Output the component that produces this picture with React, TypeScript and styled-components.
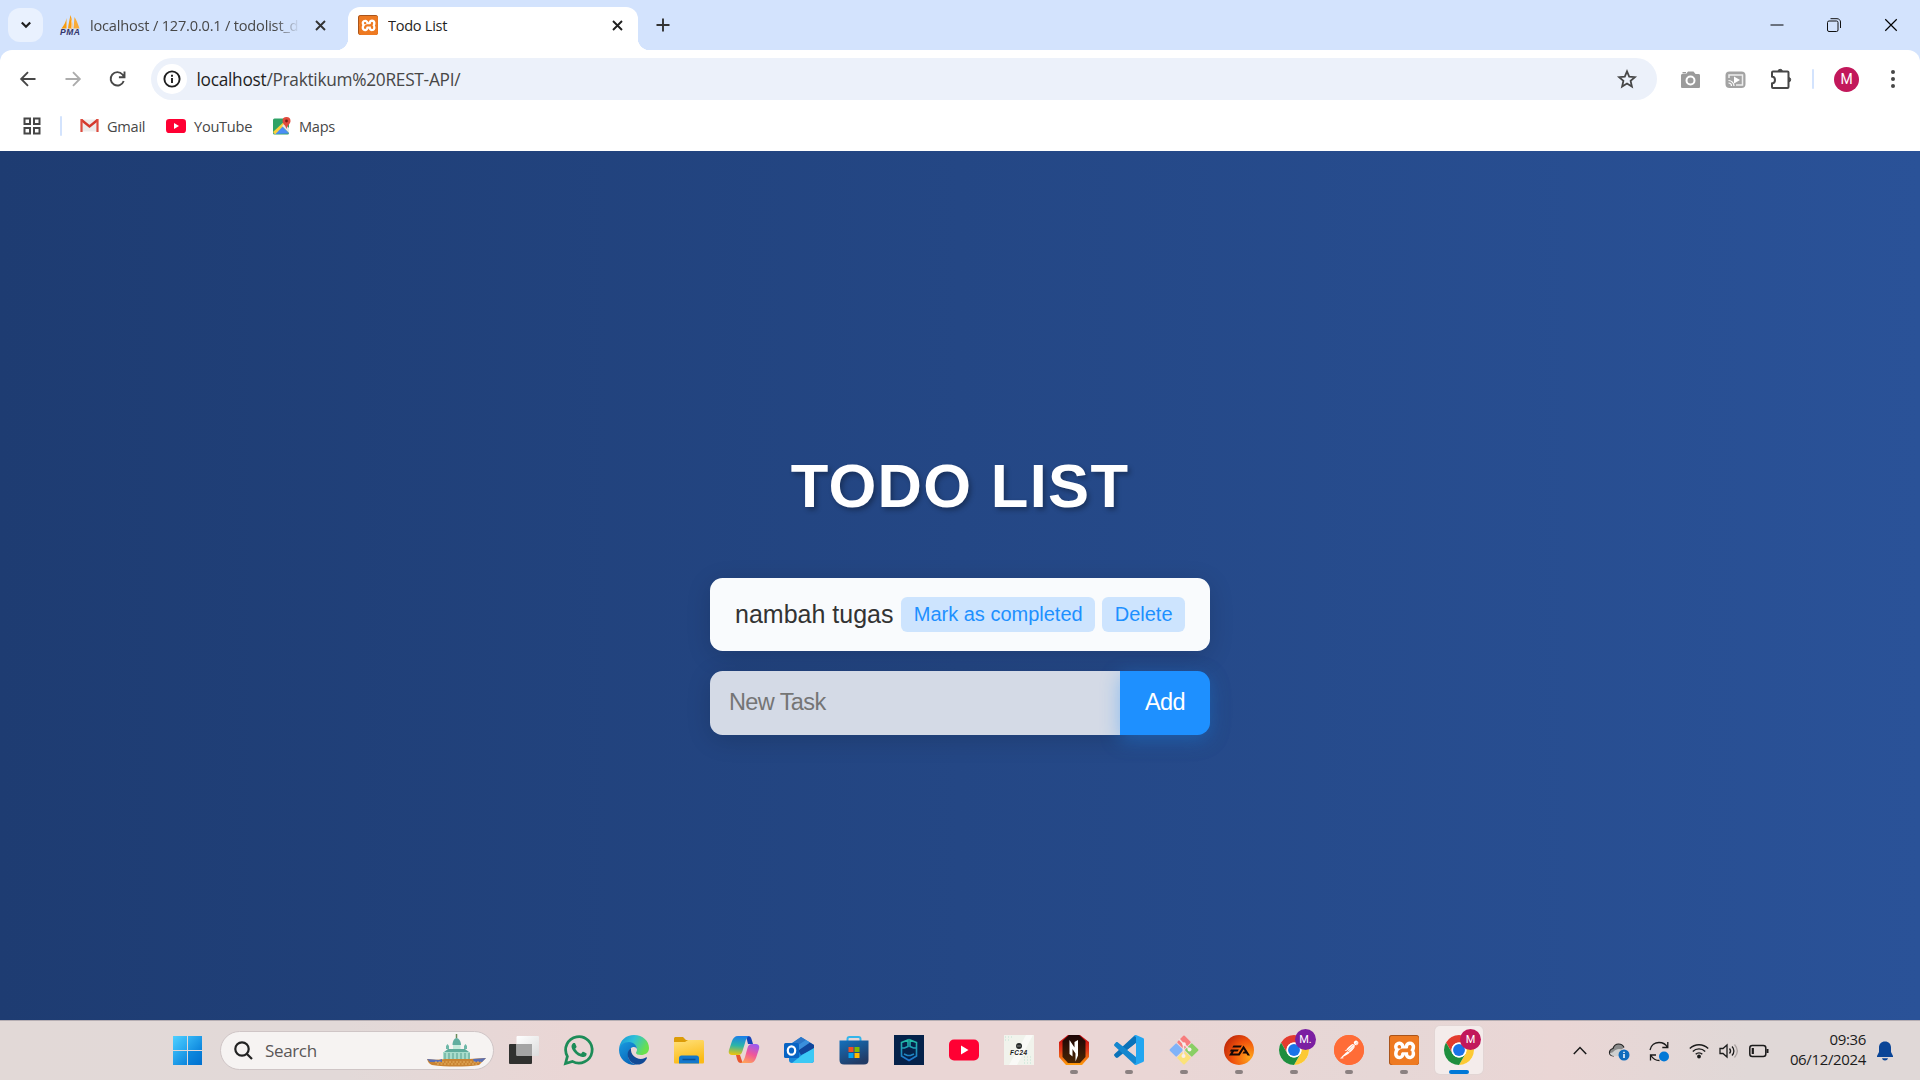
import React from "react";
import styled, { createGlobalStyle } from "styled-components";
import { SiXampp, SiPostman, SiEa } from "react-icons/si";

const UI = `"Open Sans", "Noto Sans", sans-serif`;
const ARIAL = `"Liberation Sans", Arial, sans-serif`;

const Global = createGlobalStyle`
  *, *::before, *::after { box-sizing: border-box; }
  html, body { margin: 0; padding: 0; overflow: hidden; }
  body { font-family: ${UI}; }
  button, input { font: inherit; letter-spacing: inherit; border: 0; margin: 0; padding: 0; background: none; }
  svg { display: block; flex: none; overflow: visible; }
`;

const Screen = styled.div`
  width: 1920px; height: 1080px; display: flex; flex-direction: column; overflow: hidden;
`;

/* ---------- browser chrome ---------- */
const TabStrip = styled.header`
  height: 50px; flex: none; background: #d3e3fd; display: flex; padding: 0 15px 0 8px;
`;
const TabSearch = styled.button`
  width: 35px; height: 34px; margin-top: 8px; border-radius: 12px; background: #e9f1fe;
  display: grid; place-items: center;
`;
const Tab = styled.div<{ $active?: boolean }>`
  position: relative; display: flex; align-items: center;
  width: ${(p) => (p.$active ? 290 : 288)}px;
  margin-left: ${(p) => (p.$active ? 0 : 17)}px;
  height: ${(p) => (p.$active ? 43 : 50)}px;
  margin-top: ${(p) => (p.$active ? 7 : 0)}px;
  padding: ${(p) => (p.$active ? "0 15px 7px 10px" : "0 22px 0 0")};
  border-radius: 12px 12px 0 0;
  background: ${(p) => (p.$active ? "#fff" : "transparent")};
  ${(p) =>
    p.$active &&
    `&::before, &::after { content: ""; position: absolute; bottom: 0; width: 12px; height: 12px; }
     &::before { left: -12px; background: radial-gradient(circle at 0 0, transparent 12px, #fff 12.5px); }
     &::after { right: -12px; background: radial-gradient(circle at 100% 0, transparent 12px, #fff 12.5px); }`}
`;
const TabTitle = styled.span<{ $fade?: boolean }>`
  flex: 1; margin-left: ${(p) => (p.$fade ? 9 : 10)}px; overflow: hidden; white-space: nowrap; font-size: 14.6px; line-height: 20px;
  letter-spacing: ${(p) => (p.$fade ? "-0.2px" : "-0.3px")};
  color: ${(p) => (p.$fade ? "#474747" : "#1f1f1f")};
  ${(p) => p.$fade && "margin-right: 15px; mask-image: linear-gradient(90deg, #000 88%, transparent);"}
`;
const NewTab = styled.button`margin: 17px 0 0 17px; width: 16px; height: 16px;`;
const WindowControls = styled.div`
  margin-left: auto; display: flex; align-items: center; gap: 43px; height: 49px; padding-right: 7px;
`;
const ToolbarWrap = styled.div`background: #d3e3fd; flex: none;`;
const Toolbar = styled.div`
  height: 55px; background: #fff; border-radius: 12px 12px 0 0; display: flex; align-items: center;
  padding: 3px 18px 0 18px;
`;
const NavButtons = styled.div`display: flex; gap: 24.5px; width: 132.5px; flex: none;`;
const Omnibox = styled.div`
  width: 1506.5px; flex: none; height: 42px; border-radius: 21px; background: #ecf1fa; display: flex; align-items: center;
  padding: 0 20px 0 6px;
`;
const InfoDisc = styled.span`
  width: 30px; height: 30px; border-radius: 50%; background: #fff; display: grid; place-items: center;
`;
const Url = styled.span`
  flex: 1; margin: 1px 0 0 10px; font-size: 17.3px; letter-spacing: -0.28px; line-height: 24px; color: #474747;
  b { font-weight: 400; color: #1f1f1f; }
`;
const Extensions = styled.div`display: flex; align-items: center; gap: 24px; margin-left: 23px;`;
const Rule = styled.i<{ $gap: number }>`
  width: 2px; height: 20px; background: #d3e3fd; border-radius: 1px; margin-left: ${(p) => p.$gap}px; flex: none;
`;
const Avatar = styled.span`
  width: 25px; height: 25px; border-radius: 50%; background: #c2185b; color: #fff; font: 14px/25px Roboto, sans-serif;
  text-align: center; margin: 0 auto 0 20px; flex: none;
`;
const Bookmarks = styled.nav`
  height: 46px; flex: none; background: #fff; display: flex; align-items: center; padding: 0 0 5px 23px;
`;
const Bookmark = styled.a<{ $w: number; $ml?: number }>`
  display: flex; align-items: center; gap: 8px; width: ${(p) => p.$w}px; margin-left: ${(p) => p.$ml ?? 0}px;
  font-size: 14.6px; letter-spacing: -0.27px; line-height: 20px; color: #474747; white-space: nowrap;
`;

/* ---------- page ---------- */
const Page = styled.main`
  height: 869px; flex: none; background: linear-gradient(90deg, #1e3c72, #2a5298);
  display: flex; flex-direction: column; align-items: center; font-family: ${ARIAL};
`;
const Title = styled.h1`
  margin: 300px 0 0; font-size: 61.5px; line-height: 69px; letter-spacing: 1.3px; font-weight: 700; color: #fff;
  text-shadow: 2.5px 2.5px 5px rgba(0, 0, 0, 0.3);
`;
const Task = styled.section`
  margin-top: 58px; width: 500px; height: 73px; border-radius: 12.5px; background: #f9fbfd;
  display: flex; align-items: center; padding: 0 25px; color: #333; font-size: 25px;
  box-shadow: 0 5px 25px rgba(0, 0, 0, 0.15);
`;
const TaskName = styled.span`flex: 1; white-space: nowrap;`;
const Action = styled.button`
  height: 35px; padding: 0 12.5px; margin-left: 7px; border-radius: 6.25px; background: #cde4fe; color: #1e90ff;
  font-size: 20px; line-height: 35px; white-space: nowrap;
`;
const Form = styled.form`
  margin-top: 20px; width: 500px; height: 64px; display: flex; border-radius: 12.5px;
  box-shadow: 0 5px 25px rgba(0, 0, 0, 0.15); font-size: 23.5px; letter-spacing: -0.6px;
`;
const Field = styled.input`
  width: 410px; padding: 0 19px 1px; background: #d4dae6; border-radius: 12.5px 0 0 12.5px; outline: 0; color: #333;
  &::placeholder { color: #757575; opacity: 1; }
`;
const Add = styled.button`
  width: 90px; padding-bottom: 1px; background: #1e90ff; color: #fff; border-radius: 0 12.5px 12.5px 0;
  box-shadow: 0 5px 19px rgba(30, 144, 255, 0.4);
`;

/* ---------- taskbar ---------- */
const Taskbar = styled.footer`
  height: 60px; flex: none; border-top: 1px solid #b5aeb3; display: flex; align-items: flex-start;
  padding: 0 27px 0 173px;
  background: linear-gradient(90deg, #e2d9d7 0, #e2d9d8 18%, #ead6d5 30%, #ead6d5 60%, #e6d7d6 72%, #ead6d5 81%, #e0d8d7 91%, #e0d8d7 100%);
`;
const Start = styled.div`
  width: 29px; height: 29px; margin-top: 15px; display: grid; grid-template-columns: 14px 14px; gap: 1px;
  i { background: linear-gradient(135deg, #35b6f5, #0b84dc); height: 14px; }
  i:first-child { background: linear-gradient(135deg, #4fd0ff, #22a3ee); }
  i:last-child { background: linear-gradient(135deg, #0e8ce0, #0070cf); }
`;
const Search = styled.div`
  width: 274px; height: 39px; margin: 10px 6px 0 18px; border: 1px solid #cfc5c6; border-radius: 20px; background: #f6f3f2;
  display: flex; align-items: center; padding: 0 7px 0 13px; color: #5a5757; font-size: 17px; letter-spacing: -0.35px;
  span { flex: 1; margin-left: 12px; }
`;
const AppTile = styled.div<{ $active?: boolean; $running?: boolean }>`
  position: relative; width: 48px; height: 48px; margin: 5px 7px 0 0; flex: none; display: grid; place-items: center;
  border-radius: 5px;
  background: ${(p) => (p.$active ? "#f4eceb" : "transparent")};
  box-shadow: ${(p) => (p.$active ? "0 0 0 1px #e2d5d4" : "none")};
  &::after {
    content: ""; position: absolute; bottom: 0; border-radius: 2px; height: 4px;
    width: ${(p) => (p.$active ? 20 : 8)}px; left: ${(p) => (p.$active ? 14 : 20)}px;
    background: ${(p) => (p.$active ? "#0078d7" : p.$running ? "#8b8181" : "transparent")};
  }
`;
const Badge = styled.b<{ $c: string }>`
  position: absolute; right: 2px; top: 3px; width: 21px; height: 21px; border-radius: 50%; background: ${(p) => p.$c};
  color: #fff; font: 11px/21px Roboto, sans-serif; text-align: center;
`;
const Logo = styled.span<{ $s: number; $bg: string; $r: string; $pad?: number; $fg: string; $edge?: string }>`
  width: ${(p) => p.$s}px; height: ${(p) => p.$s}px; flex: none; display: grid; place-items: center;
  background: ${(p) => p.$bg}; border-radius: ${(p) => p.$r}; color: ${(p) => p.$fg};
  box-shadow: ${(p) => (p.$edge ? `inset 0 0 0 1px ${p.$edge}` : "none")};
`;
const Tray = styled.div`margin-left: auto; height: 60px; display: flex; align-items: center;`;
const TrayIcon = styled.span<{ $r: number }>`margin-right: ${(p) => p.$r}px;`;
const Clock = styled.div`
  text-align: right; font-size: 15px; line-height: 20px; letter-spacing: -0.35px; color: #1b1b1b; width: 80px;
  margin-right: 11px; padding-bottom: 4px; white-space: nowrap;
`;

type SP = React.SVGProps<SVGSVGElement> & { s?: number };
const Svg = ({ s = 30, viewBox = "0 0 30 30", ...r }: SP) => (
  <svg width={s} height={s} viewBox={viewBox} fill="none" {...r} />
);

const Cross = ({ s = 11, w = 1.9, c = "#1f1f1f" }) => (
  <Svg s={s} viewBox="0 0 11 11" stroke={c} strokeWidth={w}><path d="M1 1l9 9M10 1l-9 9" /></Svg>
);

const Pma = () => (
  <Svg s={21} viewBox="0 0 21 21">
    <path d="M6.500 3C6 7 4 10 1.500 13.500h5zM10.500 0C9.500 5 8.500 9 8 13.500h4c.5-5 0-9-1.500-13.500z" fill="#f89c0e" />
    <path d="M14.500 2c-.5 4-.5 8-1 11.500h6C18 9 16.500 5 14.500 2z" fill="#f9ab38" />
    <path d="M10.500 3c1 4 1 7 .5 10.500h1.500c.5-4 0-7-2-10.500z" fill="#fbd09a" />
    <text x="0" y="20" fontFamily="Liberation Sans, sans-serif" fontWeight="700" fontStyle="italic" fontSize="8.500" textLength="20" fill="#34356b">PMA</text>
  </Svg>
);

const Xampp = ({ s = 30 }) => (
  <Logo $s={s} $bg="radial-gradient(#fff 0 60%, #ee7a22 61%)" $r="3px" $fg="#ee7a22" $edge="#a9541b"><SiXampp size={s - 1} /></Logo>
);

const YouTube = ({ s = 30 }) => (
  <Svg s={s}><rect y="4.500" width="30" height="21" rx="5" fill="#ff0033" /><path d="M12 10.500v9l7.500-4.500z" fill="#fff" /></Svg>
);

const Chrome = () => (
  <Svg viewBox="0 0 48 48">
    <circle cx="24" cy="24" r="24" fill="#fff" />
    <path d="M24 12h20.780A24 24 0 0 0 3.220 12l10.390 18A12 12 0 0 1 24 12z" fill="#e33b2e" />
    <path d="M34.390 30L24 48a24 24 0 0 0 20.780-36H24a12 12 0 0 1 10.390 18z" fill="#fcc934" />
    <path d="M13.610 30L3.220 12A24 24 0 0 0 24 48l10.390-18a12 12 0 0 1-20.780 0z" fill="#1e8e3e" />
    <circle cx="24" cy="24" r="12" fill="#fff" /><circle cx="24" cy="24" r="9.500" fill="#1a73e8" />
  </Svg>
);

const Cathedral = () => (
  <svg width="59" height="33" viewBox="0 0 59 33">
    <path d="M0 25c6 1 12 1 18 0h24l17-1-7 7c-14 2-32 2-47 0-3-1-4-3-5-6z" fill="#c98332" />
    <path d="M0 25l12 1 3-1v3H3zM46 25l13-1-4 4h-8z" fill="#5a6fb4" />
    <path d="M8 28h46M10 30h40" stroke="#e8b565" strokeWidth="1" strokeDasharray="2 1.500" />
    <path d="M16 25v-7h27v7z" fill="#a8dccb" />
    <path d="M18 25v-6M22 25v-6M26 25v-6M30 25v-6M34 25v-6M38 25v-6M42 25v-6" stroke="#559f90" />
    <path d="M17 18l4-3h17l4 3z" fill="#5eab9b" />
    <path d="M26 15v-4h7.500v4z" fill="#c6ebdc" />
    <path d="M25.500 11c0-4 2-7 4-7s4.500 3 4.500 7z" fill="#5fae9f" />
    <path d="M29.500 0v4" stroke="#6a8a5a" strokeWidth="1.500" />
    <path d="M19 15v-3l1.500-2 1.500 2v3zM37 15v-3l1.500-2 1.500 2v3z" fill="#6fb8a8" />
  </svg>
);

const TaskView = () => (
  <Svg>
    <defs><linearGradient id="tvw" x1="0" y1="0" x2="1" y2="1"><stop stopColor="#fff" /><stop offset="1" stopColor="#dcdcdc" /></linearGradient></defs>
    <rect y="9" width="23" height="20" rx="1" fill="#30312f" />
    <rect x="7.500" y="1" width="22.500" height="20" rx="1" fill="url(#tvw)" />
    <path d="M7.500 9H23v12H8.500a1 1 0 0 1-1-1z" fill="#a4a4a4" />
  </Svg>
);

const WhatsApp = () => (
  <Svg viewBox="0 0 24 24">
    <path fill="#1d8c58" d="M17.472 14.382c-.297-.149-1.758-.867-2.030-.967-.273-.099-.471-.148-.670.150-.197.297-.767.966-.940 1.164-.173.199-.347.223-.644.075-.297-.150-1.255-.463-2.390-1.475-.883-.788-1.480-1.761-1.653-2.059-.173-.297-.018-.458.130-.606.134-.133.298-.347.446-.520.149-.174.198-.298.298-.497.099-.198.050-.371-.025-.520-.075-.149-.669-1.612-.916-2.207-.242-.579-.487-.500-.669-.510-.173-.008-.371-.010-.570-.010-.198 0-.520.074-.792.372-.272.297-1.040 1.016-1.040 2.479 0 1.462 1.065 2.875 1.213 3.074.149.198 2.096 3.200 5.077 4.487.709.306 1.262.489 1.694.625.712.227 1.360.195 1.871.118.571-.085 1.758-.719 2.006-1.413.248-.694.248-1.289.173-1.413-.074-.124-.272-.198-.570-.347" />
    <path d="M1.200 22.800l1.500-5.700a10.600 10.600 0 1 1 4 4z" stroke="#1d8c58" strokeWidth="2.200" />
  </Svg>
);

const Edge = () => (
  <Svg>
    <defs>
      <linearGradient id="e1" x1="0" y1="0" x2="1" y2=".4"><stop stopColor="#1591d8" /><stop offset=".5" stopColor="#2fc0d8" /><stop offset="1" stopColor="#69e04c" /></linearGradient>
      <linearGradient id="e2" x1="0" y1="0" x2=".6" y2="1"><stop stopColor="#1a9be0" /><stop offset="1" stopColor="#0765b8" /></linearGradient>
    </defs>
    <path d="M0 14C1 5 7 0 15 0c9 0 15 6 15 13 0 5-4 7-8 7-3 0-5-1-5-2s1-1 1-4c0-3-4-6-8-6C5 8 1 11 0 14z" fill="url(#e1)" />
    <path d="M0 15c0-5 5-8 10-8 5 0 8 4 8 7-1-2-3-2-4-2-3 1-5 4-5 8 0 5 4 9 9 10C8 31 0 24 0 15z" fill="url(#e2)" />
    <path d="M12 13c-3 2-4 5-3 9 2 6 8 9 13 7 3-1 5-4 6-6 0-1-1-1-2 0-7 3-15-2-14-10z" fill="#114a96" />
  </Svg>
);

const Folder = () => (
  <Svg>
    <defs><linearGradient id="fo" x1="0" y1="0" x2=".3" y2="1"><stop stopColor="#ffe07a" /><stop offset="1" stopColor="#fbbb16" /></linearGradient></defs>
    <path d="M0 4c0-1.500.5-2 2-2h7l3 3h17v5H0z" fill="#dc9c08" />
    <path d="M0 7h11l3-2h14c1.500 0 2 .5 2 2v20c0 1-.5 1.500-1.500 1.500h-27C.5 28.500 0 28 0 27z" fill="url(#fo)" />
    <path d="M5 28.500V23c0-1.500 1-2.500 2.500-2.500h15c1.500 0 2.500 1 2.500 2.500v5.500z" fill="#1478cc" /><path d="M8.500 24.500h13" stroke="#0a4f94" strokeWidth="1.500" />
  </Svg>
);

const Copilot = () => (
  <Svg>
    <defs>
      <linearGradient id="c1" x1=".4" y1="0" x2=".3" y2="1"><stop stopColor="#1b7fe8" /><stop offset=".5" stopColor="#2cb5a8" /><stop offset="1" stopColor="#f0c50a" /></linearGradient>
      <linearGradient id="c2" x1=".7" y1="0" x2=".3" y2="1"><stop stopColor="#9b5af0" /><stop offset=".5" stopColor="#f0569a" /><stop offset="1" stopColor="#ffa05a" /></linearGradient>
    </defs>
    <path d="M17 1h2c2 0 3 1 3.500 3l1.500 5h-5z" fill="#1343b8" />
    <path d="M9 1h11c-2 1-3 3-4 7l-2.500 8c-1 3-2 4-4.500 4H4c-3 0-5-1-4-5L3 6c1-3 3-5 6-5z" fill="url(#c1)" />
    <path d="M7 20h4l2 6c1 2 1 2 2 2h-3c-2 0-3-1-4-4z" fill="#e8562e" />
    <path d="M21 28H12c2-1 3-3 4-6l2.500-9c1-3 2-4 4.500-4h3c3 0 5 1 4 5l-3 9c-1 3-3 5-6 5z" fill="url(#c2)" />
  </Svg>
);

const Outlook = () => (
  <Svg>
    <path d="M5 10L17 2l13 8v15c0 2-1 3-3 3H8c-2 0-3-1-3-3z" fill="#1686d9" />
    <path d="M7 9l10-7 5 3-11 8z" fill="#2d76c8" /><path d="M30 10v4L17 20l-3-5 11-8z" fill="#10459a" />
    <path d="M22 5l4 2.500L15 15l-4-3z" fill="#3b8fdc" />
    <path d="M30 13v12c0 2-1 3-3 3H8l10-8z" fill="#3cc9f5" />
    <rect y="8" width="15" height="15" rx="1.500" fill="#0864c4" /><ellipse cx="7.500" cy="15.500" rx="3.700" ry="4.200" stroke="#fff" strokeWidth="2.200" />
  </Svg>
);

const Store = () => (
  <Svg>
    <defs><linearGradient id="st" x1="0" y1="0" x2=".5" y2="1"><stop stopColor="#1471bd" /><stop offset="1" stopColor="#213b66" /></linearGradient></defs>
    <path d="M8.500 6V4c0-1.500.5-2 2-2h9c1.500 0 2 .5 2 2v2" stroke="#35b5ea" strokeWidth="2" />
    <path d="M.5 5.500h29V25c0 3-1.500 4.500-4.500 4.500H5C2 29.500.5 28 .5 25z" fill="url(#st)" />
    <path d="M9.500 12h5v5h-5z" fill="#f25022" /><path d="M15.500 12h5v5h-5z" fill="#7fba00" /><path d="M9.500 18h5v5h-5z" fill="#00a4ef" /><path d="M15.500 18h5v5h-5z" fill="#ffb900" />
  </Svg>
);

const GameApp = () => (
  <Svg>
    <defs><linearGradient id="pg" gradientUnits="userSpaceOnUse" x1="0" y1="4" x2="0" y2="26"><stop stopColor="#22c3a4" /><stop offset="1" stopColor="#1e6fd0" /></linearGradient></defs>
    <path d="M0 0h30v30H0z" fill="#05224a" />
    <g stroke="url(#pg)" strokeWidth="1.600"><path d="M7.500 14V7.500L14 5v6.500L10.500 13H7.500v8l7.500 4.500 7.500-4.500V7.500L16 5v6.500l3.500 1.500h3" /><path d="M10 19l3.500 1.500h3L20 19" /></g>
  </Svg>
);

const Fc24 = () => (
  <Svg>
    <path d="M0 0h30v30H0z" fill="#f1f3ec" /><path d="M22 0L5 30h8L29 0z" fill="#fafaf7" />
    <path d="M1 2h9M1 5h6M20 22h9M20 25h9M20 28h9" stroke="#bfe3d3" strokeDasharray="1 2" />
    <circle cx="15" cy="11" r="3" fill="#252a28" /><path d="M13 11h4" stroke="#888" />
    <text x="6" y="19.500" fontFamily="Liberation Sans, sans-serif" fontWeight="700" fontStyle="italic" fontSize="6.500" textLength="17" fill="#1c201e">FC24</text>
  </Svg>
);

const Nitro = () => (
  <Svg>
    <defs><linearGradient id="ni" x1="0" y1="0" x2="0" y2="1"><stop stopColor="#c4060f" /><stop offset=".5" stopColor="#e0381a" /><stop offset="1" stopColor="#ff9c0a" /></linearGradient>
      <linearGradient id="ni2" x1="0" y1="0" x2="0" y2="1"><stop stopColor="#1c0505" /><stop offset="1" stopColor="#4a2505" /></linearGradient></defs>
    <path d="M9 0h12l9 7v15l-7 8H7l-7-8V7z" fill="url(#ni)" /><path d="M10 0h10l6.500 6v16L21 28H9l-5.500-6V6z" fill="url(#ni2)" />
    <path d="M10.500 5l5 7.500V7l3.500-2v15.500l-2.500 6v-8l-3-4.500v7.500L10.500 19z" fill="#fff" />
  </Svg>
);

const VsCode = () => (
  <Svg>
    <path d="M22 0v8L4 22.500c-.8.600-1.500.5-2.200 0L.5 21c-.6-.6-.6-1.400 0-2L20 1z" fill="#0a72b9" />
    <path d="M22 30v-8L4 7.500c-.8-.6-1.500-.5-2.200 0L.5 9c-.6.600-.6 1.400 0 2L20 29z" fill="#1487cf" />
    <path d="M22 0l7 3c.7.3 1 .8 1 1.500v21c0 .7-.3 1.200-1 1.500l-7 3c-1 0-1.500-.5-2-1l2-1V2l-2-1c.5-.5 1-1 2-1z" fill="#22a6f1" />
    <path d="M22 8.500v13L13.500 15z" fill="#ead6d5" />
  </Svg>
);

const Git = () => (
  <Svg>
    <g transform="rotate(45 15 15)">
      <rect x="4.500" y="4.500" width="10" height="10" rx="1" fill="#f77d7d" /><rect x="15.500" y="4.500" width="10" height="10" rx="1" fill="#89cf64" />
      <rect x="4.500" y="15.500" width="10" height="10" rx="1" fill="#80b3f8" /><rect x="15.500" y="15.500" width="10" height="10" rx="1" fill="#fbe27a" />
    </g>
    <path d="M10 4l4.500 5v12M15 9l5 5" stroke="#f3e3e0" strokeWidth="1.600" /><circle cx="15" cy="9" r="1.800" fill="#f8eeec" /><circle cx="20.500" cy="14.500" r="2" fill="#f8eeec" /><circle cx="14.500" cy="21" r="2" fill="#f8eeec" />
  </Svg>
);

const Ea = () => (
  <Logo $s={30} $r="50%" $fg="#140806" $bg="radial-gradient(circle at 85% 75%, #ffa51a, #f0520c 50%, #a81408)"><SiEa size={21} /></Logo>
);

const Postman = () => (
  <Logo $s={30} $r="50%" $fg="#ff6c37" $bg="radial-gradient(#fff 60%, #ff6c37 61%)"><SiPostman size={30} /></Logo>
);

const apps: { icon: React.ReactNode; running?: boolean; active?: boolean; badge?: [string, string] }[] = [
  { icon: <TaskView /> }, { icon: <WhatsApp /> }, { icon: <Edge /> }, { icon: <Folder /> }, { icon: <Copilot /> },
  { icon: <Outlook /> }, { icon: <Store /> }, { icon: <GameApp /> }, { icon: <YouTube /> }, { icon: <Fc24 /> },
  { icon: <Nitro />, running: true }, { icon: <VsCode />, running: true }, { icon: <Git />, running: true },
  { icon: <Ea />, running: true }, { icon: <Chrome />, running: true, badge: ["M.", "#7b1fa2"] },
  { icon: <Postman />, running: true }, { icon: <Xampp />, running: true },
  { icon: <Chrome />, active: true, badge: ["M", "#c2185b"] },
];

export default function App() {
  return (
    <Screen>
      <Global />
      <TabStrip>
        <TabSearch aria-label="Search tabs"><Svg s={10} viewBox="0 0 10 10" stroke="#1f1f1f" strokeWidth="2.200"><path d="M.8 2.500L5 6.700l4.200-4.200" /></Svg></TabSearch>
        <Tab>
          <Pma /><TabTitle $fade>localhost / 127.0.0.1 / todolist_d</TabTitle><Cross c="#333" />
        </Tab>
        <Tab $active>
          <Xampp s={20} /><TabTitle>Todo List</TabTitle><Cross />
        </Tab>
        <NewTab aria-label="New tab"><Svg s={16} viewBox="0 0 16 16" stroke="#333" strokeWidth="1.900"><path d="M8 1.500v13M1.500 8h13" /></Svg></NewTab>
        <WindowControls>
          <Svg s={14} viewBox="0 0 14 14" stroke="#000"><path d="M.5 7h13" /></Svg>
          <Svg s={14} viewBox="0 0 14 14" stroke="#111"><rect x=".5" y="3" width="10.500" height="10.500" rx="1.500" /><path d="M3.500 .7H10c2 0 3.500 1.500 3.500 3.300v6" /></Svg>
          <Cross s={14} w={0.9} c="#000" />
        </WindowControls>
      </TabStrip>
      <ToolbarWrap>
        <Toolbar>
          <NavButtons>
            <Svg s={20} viewBox="0 0 20 20" stroke="#474747" strokeWidth="1.900"><path d="M17.500 10H4M10 3.200L3.200 10l6.800 6.800" /></Svg>
            <Svg s={20} viewBox="0 0 20 20" stroke="#acacac" strokeWidth="1.900"><path d="M2.500 10H16M10 3.200l6.800 6.800-6.800 6.800" /></Svg>
            <Svg s={20} viewBox="0 0 20 20" stroke="#474747" strokeWidth="1.900"><path d="M16.700 12A6.700 6.700 0 1 1 15.500 5.500L17.300 8M17.500 2.500V8.200h-5.600" /></Svg>
          </NavButtons>
          <Omnibox>
            <InfoDisc><Svg s={18} viewBox="0 0 18 18" stroke="#1f1f1f" strokeWidth="1.900"><circle cx="9" cy="9" r="7.600" /><path d="M9 8v5M9 4.700v2" /></Svg></InfoDisc>
            <Url><b>localhost</b>/Praktikum%20REST-API/</Url>
            <Svg s={20} viewBox="0 0 20 20" stroke="#474747" strokeWidth="1.800"><path d="M10 2.300l2.200 5.300 5.700.5-4.300 3.800 1.300 5.600-4.900-3-4.900 3 1.300-5.600L2.100 8.100l5.700-.5z" /></Svg>
          </Omnibox>
          <Extensions>
            <Svg s={21} viewBox="0 0 21 21"><path d="M2.500 5h3.500l2-2.500h5.500l2 2.500h3c1 0 1.500.5 1.500 1.500v11c0 1-.5 1.500-1.500 1.500h-16C1.500 19 1 18.500 1 17.500v-11C1 5.500 1.500 5 2.500 5zM2.500 3H6v1.500H2.500z" fill="#9b9b9b" /><circle cx="10.500" cy="11.500" r="4" fill="#9b9b9b" stroke="#fff" strokeWidth="2" /><circle cx="10.500" cy="11.500" r="1.500" fill="#9b9b9b" /></Svg>
            <Svg s={21} viewBox="0 0 21 21"><rect x=".5" y="2.500" width="20" height="16.500" rx="4" fill="#a3a3a3" /><path d="M4 9V6h13.500v10H11" stroke="#eee" strokeWidth="1.500" /><path d="M9 7.500l6 3.500-6 3.500z" fill="#fff" /><path d="M3.500 11.500a5.500 5.500 0 0 1 5.500 5.500M3.500 14a3 3 0 0 1 3 3" stroke="#fff" strokeWidth="1.200" /></Svg>
            <Svg s={22} viewBox="0 0 22 22"><path d="M3 3.500h14.500c.6 0 1 .4 1 1V19c0 .6-.4 1-1 1H3c-.6 0-1-.4-1-1v-3.500c4-.5 4-6.500 0-7v-4c0-.6.400-1 1-1z" stroke="#474747" strokeWidth="2" /><path d="M8 3.500a2.200 2.200 0 0 1 4.400 0zM18.500 9.500a2.200 2.200 0 0 1 0 4.400z" fill="#474747" stroke="#474747" /></Svg>
          </Extensions>
          <Rule $gap={20} /><Avatar>M</Avatar>
          <Svg s={20} viewBox="0 0 20 20"><circle cx="11" cy="3" r="2" fill="#474747" /><circle cx="11" cy="10" r="2" fill="#474747" /><circle cx="11" cy="17" r="2" fill="#474747" /></Svg>
        </Toolbar>
      </ToolbarWrap>
      <Bookmarks>
        <Svg s={18} viewBox="0 0 18 18" stroke="#474747" strokeWidth="2"><path d="M1.500 1.500H7V7H1.500zM11 1.500h5.500V7H11zM1.500 11H7v5.500H1.500zM11 11h5.500v5.500H11z" /></Svg>
        <Rule $gap={19} />
        <Bookmark $w={86} $ml={18}>
          <Svg s={19} viewBox="0 0 19 19"><path d="M1.500 3.500h16v12h-16z" fill="#ececec" /><path d="M1.500 4l8 6.500 8-6.500" stroke="#d4382c" strokeWidth="2.400" /><path d="M1.500 16V3M17.500 16V3" stroke="#dd4b3e" strokeWidth="2.200" /></Svg>Gmail
        </Bookmark>
        <Bookmark $w={107}><YouTube s={20} />YouTube</Bookmark>
        <Bookmark $w={70}>
          <Svg s={18} viewBox="0 0 18 18"><rect x="0" y="1.500" width="16" height="16" rx="1.500" fill="#2fa266" /><path d="M1 17L9 9l7 7.500z" fill="#4a8df5" /><path d="M0 15L14 2l2 1L2 17.500z" fill="#fbd03c" /><path d="M9 9l2.500-2.500L16 11v5z" fill="#e6e6e6" /><path d="M13.500 0a4 4 0 0 1 4 4c0 3-3.200 4-4 8-.8-4-4-5-4-8a4 4 0 0 1 4-4z" fill="#e04a3c" /><circle cx="13.500" cy="4" r="1.400" fill="#7c1d15" /></Svg>Maps
        </Bookmark>
      </Bookmarks>
      <Page>
        <Title>TODO LIST</Title>
        <Task><TaskName>nambah tugas</TaskName><Action>Mark as completed</Action><Action>Delete</Action></Task>
        <Form onSubmit={(e) => e.preventDefault()}><Field placeholder="New Task" /><Add>Add</Add></Form>
      </Page>
      <Taskbar>
        <Start><i /><i /><i /><i /></Start>
        <Search>
          <Svg s={19} viewBox="0 0 19 19" stroke="#222" strokeWidth="2.200"><circle cx="8" cy="8" r="6.700" /><path d="M13 13l5 5" /></Svg>
          <span>Search</span><Cathedral />
        </Search>
        {apps.map((a, i) => (
          <AppTile key={i} $running={a.running} $active={a.active}>
            {a.icon}{a.badge && <Badge $c={a.badge[1]}>{a.badge[0]}</Badge>}
          </AppTile>
        ))}
        <Tray>
          <TrayIcon $r={22}><Svg s={14} viewBox="0 0 14 14" stroke="#1b1b1b" strokeWidth="1.500"><path d="M.8 10L7 3.500l6.200 6.500" /></Svg></TrayIcon>
          <TrayIcon $r={19}><Svg s={21} viewBox="0 0 21 21"><path d="M5 15c-3 0-4.500-1.500-4.500-3.500S2 8 4 7.500C5 4.500 7 3 9.500 3s4.500 1 5.500 3.500" fill="#8b8b8b" stroke="#222" strokeWidth="1.200" /><path d="M1 12c4 0 4-4 9-4 3 0 5 1 6 2l-6 5H5c-2 0-4-1-4-3z" fill="#cfcfcf" /><circle cx="15" cy="14" r="5.500" fill="#0f6cbd" /><path d="M15 13v4M15 10.700v1.400" stroke="#fff" strokeWidth="1.500" /></Svg></TrayIcon>
          <TrayIcon $r={19}><Svg s={21} viewBox="0 0 21 21" stroke="#1b1b1b" strokeWidth="1.300"><path d="M1 9C2 4 6 1.500 10 1.500c4 0 7 2 8.500 5M18.800 1v5.500h-5.500M1.500 19.500V14H7M2 14.500c2 3.500 5 5 8.500 5" /><circle cx="15" cy="15.500" r="5" fill="#0078d7" stroke="none" /></Svg></TrayIcon>
          <TrayIcon $r={10}><Svg s={20} viewBox="0 0 20 20" stroke="#1b1b1b" strokeWidth="1.400"><path d="M.8 7.500a13 13 0 0 1 18.400 0M3.800 10.500a8.700 8.700 0 0 1 12.400 0M6.700 13.300a4.700 4.700 0 0 1 6.600 0" /><circle cx="10" cy="15.500" r="1.200" fill="#1b1b1b" /></Svg></TrayIcon>
          <TrayIcon $r={10}><Svg s={20} viewBox="0 0 20 20" stroke="#1b1b1b" strokeWidth="1.300"><path d="M1 7.500h3L8 4v12l-4-3.500H1z" /><path d="M10.500 7.500c1.300 1.500 1.300 3.500 0 5M13 5.500c2.500 2.500 2.500 6.500 0 9" /><path d="M15.500 3.500c3.500 4 3.500 9 0 13" stroke="#aaa2a1" /></Svg></TrayIcon>
          <TrayIcon $r={17}><Svg s={20} viewBox="0 0 20 20" stroke="#1b1b1b" strokeWidth="1.500"><rect x=".8" y="4.500" width="16" height="11" rx="2.500" /><path d="M3.800 7v6" strokeWidth="2.200" /><path d="M18.500 8v4" strokeWidth="2" /></Svg></TrayIcon>
          <Clock>09:36<br />06/12/2024</Clock>
          <Svg s={16} viewBox="0 0 16 20" height="20"><path d="M8 .5c-3.700 0-6 2.600-6 6V11l-2 4v1h16v-1l-2-4V6.500c0-3.400-2.300-6-6-6zM5 17.300h6c-.5 1.500-1.500 2.200-3 2.200s-2.500-.7-3-2.200z" fill="#0a4597" /></Svg>
        </Tray>
      </Taskbar>
    </Screen>
  );
}
